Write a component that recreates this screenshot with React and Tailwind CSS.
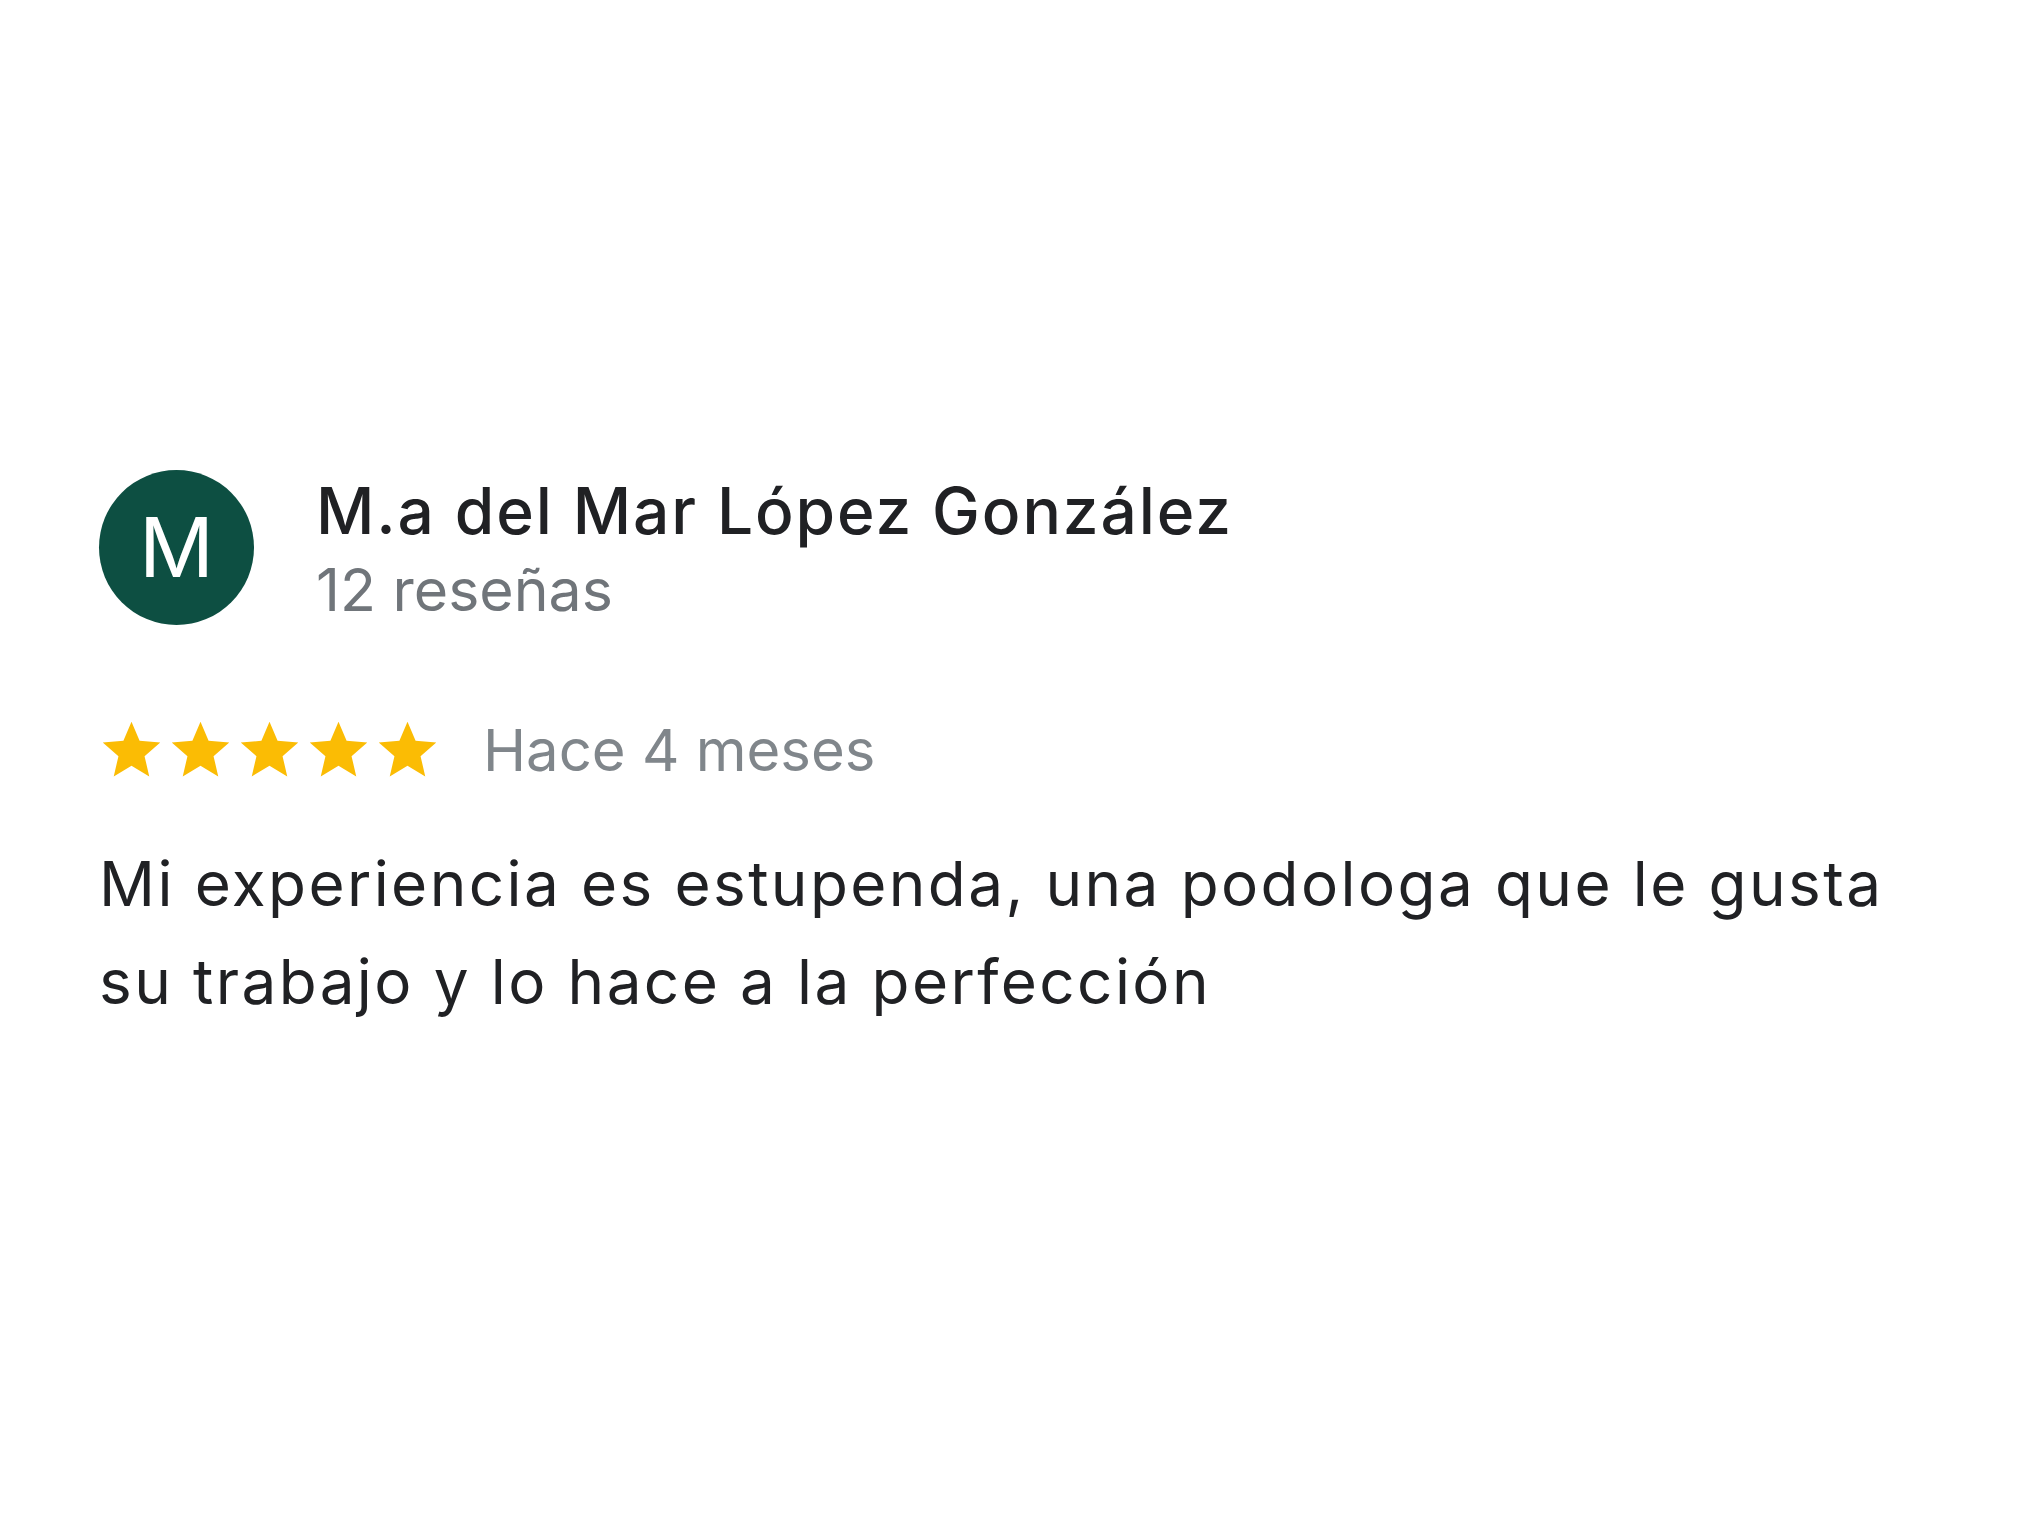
const StarIcon = () => (
    <svg viewBox="0 0 24 24" className="w-[69px] h-[69px] shrink-0" fill="#fbbc04">
        <path d="M12 17.27L18.18 21l-1.64-7.03L22 9.24l-7.19-.61L12 2 9.19 8.63 2 9.24l5.46 4.73L5.82 21z" />
    </svg>
);

const App = () => {
    return (
        <div className="min-h-screen bg-white px-[99px] pt-[470px] font-['Inter',sans-serif]">
            {/* header: avatar + name */}
            <div className="flex items-start gap-[62px]">
                <div className="w-[155px] h-[155px] rounded-full bg-[#0d4f42] flex items-center justify-center shrink-0">
                    <span className="text-white text-[83px] leading-none">M</span>
                </div>
                <div className="pt-px">
                    <p className="text-[64px] leading-[80px] font-medium tracking-[1.9px] text-[#202124]">M.a del Mar López González</p>
                    <p className="text-[59px] leading-[80px] text-[#70757a] -mt-[1px]">12 reseñas</p>
                </div>
            </div>

            <div className="flex items-center mt-[80px]">
                <div className="flex -ml-[2px]">
                    {[0, 1, 2, 3, 4].map((i) => (
                        <StarIcon key={i} />
                    ))}
                </div>
                <span className="ml-[41px] text-[58px] leading-[80px] text-[#80868b]">Hace 4 meses</span>
            </div>

            <p className="mt-[45px] text-[62px] leading-[98px] tracking-[2.4px] text-[#202124]">
                Mi experiencia es estupenda, una podologa que le gusta su trabajo y lo hace a la perfección
            </p>
        </div>
    );
};

export default App;
